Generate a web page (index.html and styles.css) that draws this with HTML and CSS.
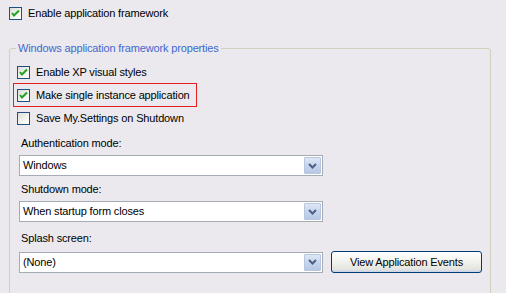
FILE: index.html
```html
<!DOCTYPE html>
<html lang="en">
<head>
<meta charset="UTF-8">
<title>Application framework</title>
<link rel="stylesheet" href="styles.css">
</head>
<body>
<div class="page">
  <label class="check top-check">
    <span class="box checked"><svg viewBox="0 0 11 11" width="11" height="11"><path d="M2 5 L4 7.5 L9 2.5" fill="none" stroke="#21a121" stroke-width="2"/></svg></span>
    <span>Enable application framework</span>
  </label>

  <fieldset class="group">
    <legend>Windows application framework properties</legend>

    <div class="checks">
      <label class="check">
        <span class="box checked"><svg viewBox="0 0 11 11" width="11" height="11"><path d="M2 5 L4 7.5 L9 2.5" fill="none" stroke="#21a121" stroke-width="2"/></svg></span>
        <span>Enable XP visual styles</span>
      </label>
      <label class="check highlight">
        <span class="box checked"><svg viewBox="0 0 11 11" width="11" height="11"><path d="M2 5 L4 7.5 L9 2.5" fill="none" stroke="#21a121" stroke-width="2"/></svg></span>
        <span>Make single instance application</span>
      </label>
      <label class="check">
        <span class="box"></span>
        <span>Save My.Settings on Shutdown</span>
      </label>
    </div>

    <div class="field">
      <div class="field-label">Authentication mode:</div>
      <div class="combo">
        <span class="combo-value">Windows</span>
        <span class="combo-btn"><svg viewBox="0 0 9 6" width="9" height="6"><path d="M1 1 L4.5 4.5 L8 1" fill="none" stroke="#4d6185" stroke-width="2"/></svg></span>
      </div>
    </div>

    <div class="field">
      <div class="field-label">Shutdown mode:</div>
      <div class="combo">
        <span class="combo-value">When startup form closes</span>
        <span class="combo-btn"><svg viewBox="0 0 9 6" width="9" height="6"><path d="M1 1 L4.5 4.5 L8 1" fill="none" stroke="#4d6185" stroke-width="2"/></svg></span>
      </div>
    </div>

    <div class="field splash">
      <div class="field-label">Splash screen:</div>
      <div class="field-row">
        <div class="combo">
          <span class="combo-value">(None)</span>
          <span class="combo-btn"><svg viewBox="0 0 9 6" width="9" height="6"><path d="M1 1 L4.5 4.5 L8 1" fill="none" stroke="#4d6185" stroke-width="2"/></svg></span>
        </div>
        <button class="btn" type="button">View Application Events</button>
      </div>
    </div>
  </fieldset>
</div>
</body>
</html>
```

FILE: styles.css
```css
body {
margin: 0;
background: #ebe9ed;
font-family: 'Liberation Sans', Arial, sans-serif;
font-size: 11px;
letter-spacing: -0.15px;
color: #000;
}
.page {
padding: 6px 0 0 9px;
width: 482px;
}
.check {
display: flex;
align-items: center;
gap: 6px;
height: 14px;
}
.top-check {
gap: 6px;
}
.box {
box-sizing: border-box;
width: 13px;
height: 13px;
border: 1px solid #1c5180;
background: linear-gradient(135deg, #dcdcd7 0%, #f7f7f5 70%, #fff 100%);
display: flex;
align-items: center;
justify-content: center;
flex: none;
}
.group {
margin: 22px 0 0 0;
padding: 11px 0 30px 0;
border: 1px solid #d0d0bf;
border-radius: 3px;
min-width: 0;
}
.group legend {
color: #3f68d0;
padding: 0 2px;
margin-left: 6px;
}
.checks {
display: flex;
flex-direction: column;
align-items: flex-start;
gap: 9px;
padding-left: 7px;
}
.check.highlight {
border: 1px solid #e3201f;
margin-left: -4px;
padding: 4px 6px 4px 3px;
margin-top: -5px;
margin-bottom: -5px;
}
.field {
padding-left: 9px;
margin-top: 11px;
}
.field + .field {
margin-top: 6px;
}
.field.splash {
margin-top: 9px;
}
.field.splash .field-label {
margin-bottom: 6px;
}
.field-label {
padding-left: 2px;
height: 14px;
line-height: 14px;
margin-bottom: 5px;
}
.field-row {
display: flex;
align-items: center;
gap: 8px;
}
.combo {
box-sizing: border-box;
width: 304px;
height: 21px;
border: 1px solid #a5acb5;
background: #fff;
display: flex;
align-items: stretch;
padding: 1px;
}
.combo-value {
flex: 1;
padding-left: 2px;
line-height: 17px;
}
.combo-btn {
box-sizing: border-box;
width: 17px;
border: 1px solid #b8c6de;
border-radius: 1px;
background: linear-gradient(180deg, #dfe7f6 0%, #c7d5ee 50%, #b6c8e6 100%);
display: flex;
align-items: center;
justify-content: center;
}
.btn {
box-sizing: border-box;
width: 151px;
height: 22px;
border: 1px solid #003c74;
border-radius: 3px;
background: linear-gradient(180deg, #ffffff 0%, #f4f4f0 40%, #e6e6e0 85%, #c9d3e6 100%);
font-family: 'Liberation Sans', Arial, sans-serif;
font-size: 11px;
letter-spacing: -0.15px;
color: #000;
padding: 0;
}
```
